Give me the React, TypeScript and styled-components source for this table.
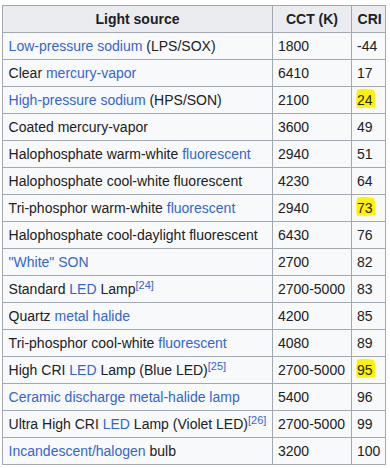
import React from "react";
import styled, { createGlobalStyle } from "styled-components";

const Global = createGlobalStyle`
  html, body { margin: 0; padding: 0; background: #ffffff; }
  body { font-family: "Liberation Sans", Arial, sans-serif; color: #202122; }
`;

const Wrap = styled.div`
  padding: 5px 0 0 2px;
`;

const Table = styled.table`
  border-collapse: collapse;
  table-layout: fixed;
  width: 384px;
  background: #f8f9fa;
  border: 1px solid #a2a9b1;
  font-size: 14px;
  color: #202122;
`;

const Th = styled.th`
  background: #eaecf0;
  border: 1px solid #a2a9b1;
  font-weight: bold;
  text-align: center;
  height: 27px;
  padding: 0 5.6px;
  line-height: 20px;
  box-sizing: border-box;
`;

const Td = styled.td<{ $num?: boolean }>`
  border: 1px solid #a2a9b1;
  height: 27px;
  padding: 0 ${(p) => (p.$num ? "5px" : "5.6px")};
  line-height: 20px;
  white-space: nowrap;
  vertical-align: middle;
  box-sizing: border-box;
`;

const A = styled.span`
  color: #3366cc;
`;

const Ref = styled.sup`
  font-size: 11px;
  line-height: 1;
  vertical-align: 5px;
  color: #3366cc;
`;

const Mark = styled.span`
  position: relative;
  display: inline-block;
`;

const Blob = styled.svg`
  position: absolute;
  left: -3px;
  top: -3px;
  width: 23px;
  height: 23px;
  z-index: 0;
`;

const MarkText = styled.span`
  position: relative;
  z-index: 1;
`;

function Hl({ children }: { children: React.ReactNode }) {
  return (
    <Mark>
      <Blob viewBox="0 0 23 23">
        <path
          d="M3 3 C6 1.5 12 2 20 3 C21.5 8 22 14 21 20 C15 21 8 21 4 20.5 C2.5 21.5 2 22.5 3 22 C2 16 2 9 3 3 Z"
          fill="#fff200"
        />
      </Blob>
      <MarkText>{children}</MarkText>
    </Mark>
  );
}

type Row = { src: React.ReactNode; cct: string; cri: React.ReactNode };

const rows: Row[] = [
  { src: <><A>Low-pressure sodium</A> (LPS/SOX)</>, cct: "1800", cri: "-44" },
  { src: <>Clear <A>mercury-vapor</A></>, cct: "6410", cri: "17" },
  { src: <><A>High-pressure sodium</A> (HPS/SON)</>, cct: "2100", cri: <Hl>24</Hl> },
  { src: <>Coated mercury-vapor</>, cct: "3600", cri: "49" },
  { src: <>Halophosphate warm-white <A>fluorescent</A></>, cct: "2940", cri: "51" },
  { src: <>Halophosphate cool-white fluorescent</>, cct: "4230", cri: "64" },
  { src: <>Tri-phosphor warm-white <A>fluorescent</A></>, cct: "2940", cri: <Hl>73</Hl> },
  { src: <>Halophosphate cool-daylight fluorescent</>, cct: "6430", cri: "76" },
  { src: <><A>"White" SON</A></>, cct: "2700", cri: "82" },
  { src: <>Standard <A>LED</A> Lamp<Ref>[24]</Ref></>, cct: "2700-5000", cri: "83" },
  { src: <>Quartz <A>metal halide</A></>, cct: "4200", cri: "85" },
  { src: <>Tri-phosphor cool-white <A>fluorescent</A></>, cct: "4080", cri: "89" },
  { src: <>High CRI <A>LED</A> Lamp (Blue LED)<Ref>[25]</Ref></>, cct: "2700-5000", cri: <Hl>95</Hl> },
  { src: <><A>Ceramic discharge metal-halide lamp</A></>, cct: "5400", cri: "96" },
  { src: <>Ultra High CRI <A>LED</A> Lamp (Violet LED)<Ref>[26]</Ref></>, cct: "2700-5000", cri: "99" },
  { src: <><A>Incandescent/halogen</A> bulb</>, cct: "3200", cri: "100" },
];

export default function App() {
  return (
    <>
      <Global />
      <Wrap>
        <Table>
          <colgroup>
            <col style={{ width: 270 }} />
            <col style={{ width: 79 }} />
            <col style={{ width: 34 }} />
          </colgroup>
          <thead>
            <tr>
              <Th>Light source</Th>
              <Th>CCT (K)</Th>
              <Th>CRI</Th>
            </tr>
          </thead>
          <tbody>
            {rows.map((r, i) => (
              <tr key={i}>
                <Td>{r.src}</Td>
                <Td $num>{r.cct}</Td>
                <Td $num>{r.cri}</Td>
              </tr>
            ))}
          </tbody>
        </Table>
      </Wrap>
    </>
  );
}
